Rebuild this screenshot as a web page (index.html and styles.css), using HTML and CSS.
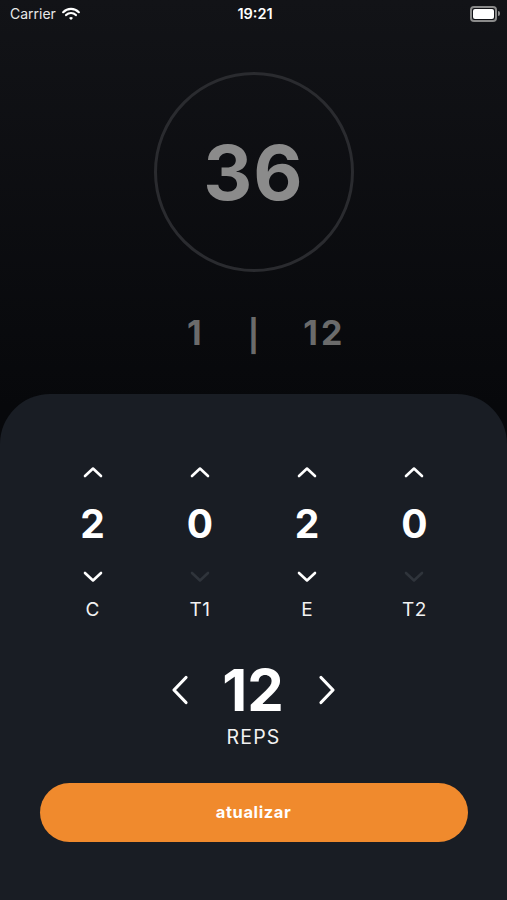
FILE: index.html
```html
<!DOCTYPE html>
<html lang="pt">
<head>
    <meta charset="UTF-8">
    <meta name="viewport" content="width=device-width, initial-scale=1.0">
    <title>Timer</title>
    <link rel="stylesheet" href="styles.css">
</head>
<body>
    <div class="screen">
        <!-- Status bar -->
        <div class="status-bar">
            <div class="carrier">
                Carrier
                <svg class="wifi" width="18" height="14" viewBox="0 0 18 14">
                    <path d="M1.2 5.2 A11 11 0 0 1 16.8 5.2" fill="none" stroke="#fff" stroke-width="2.2" stroke-linecap="round"/>
                    <path d="M4.1 8.1 A6.8 6.8 0 0 1 13.9 8.1" fill="none" stroke="#fff" stroke-width="2.2" stroke-linecap="round"/>
                    <path d="M7 11 L9 13 L11 11 A2.8 2.8 0 0 0 7 11 Z" fill="#fff"/>
                </svg>
            </div>
            <div class="clock">19:21</div>
            <div class="battery">
                <span class="battery-body"><span class="battery-fill"></span></span>
                <span class="battery-cap"></span>
            </div>
        </div>

        <!-- Timer -->
        <div class="timer">
            <div class="ring">36</div>
        </div>

        <div class="progress">
            <span class="progress-left">1</span>
            <span class="progress-sep">|</span>
            <span class="progress-right">12</span>
        </div>

        <!-- Settings panel -->
        <div class="panel">
            <div class="steps">
                <div class="step">
                    <button class="chev"><svg width="20" height="12" viewBox="0 0 20 12"><path d="M2 10 L10 2.5 L18 10"/></svg></button>
                    <div class="step-value">2</div>
                    <button class="chev"><svg width="20" height="12" viewBox="0 0 20 12"><path d="M2 2 L10 9.5 L18 2"/></svg></button>
                    <div class="step-label">C</div>
                </div>
                <div class="step">
                    <button class="chev"><svg width="20" height="12" viewBox="0 0 20 12"><path d="M2 10 L10 2.5 L18 10"/></svg></button>
                    <div class="step-value">0</div>
                    <button class="chev disabled"><svg width="20" height="12" viewBox="0 0 20 12"><path d="M2 2 L10 9.5 L18 2"/></svg></button>
                    <div class="step-label">T1</div>
                </div>
                <div class="step">
                    <button class="chev"><svg width="20" height="12" viewBox="0 0 20 12"><path d="M2 10 L10 2.5 L18 10"/></svg></button>
                    <div class="step-value">2</div>
                    <button class="chev"><svg width="20" height="12" viewBox="0 0 20 12"><path d="M2 2 L10 9.5 L18 2"/></svg></button>
                    <div class="step-label">E</div>
                </div>
                <div class="step">
                    <button class="chev"><svg width="20" height="12" viewBox="0 0 20 12"><path d="M2 10 L10 2.5 L18 10"/></svg></button>
                    <div class="step-value">0</div>
                    <button class="chev disabled"><svg width="20" height="12" viewBox="0 0 20 12"><path d="M2 2 L10 9.5 L18 2"/></svg></button>
                    <div class="step-label">T2</div>
                </div>
            </div>

            <div class="reps">
                <button class="chev-side"><svg width="18" height="30" viewBox="0 0 18 30"><path d="M15 2.5 L3 15 L15 27.5"/></svg></button>
                <div class="reps-value">12</div>
                <button class="chev-side"><svg width="18" height="30" viewBox="0 0 18 30"><path d="M3 2.5 L15 15 L3 27.5"/></svg></button>
            </div>
            <div class="reps-label">REPS</div>

            <button class="update">atualizar</button>
        </div>
    </div>
</body>
</html>
```

FILE: styles.css
```css
/* Base */
body {
    margin: 0;
    background: #0a0b0e;
    font-family: 'Inter', 'Liberation Sans', sans-serif;
    color: #fff;
}

.screen {
    width: 507px;
    height: 900px;
    display: flex;
    flex-direction: column;
    background: linear-gradient(#121317, #07080b 45%);
    overflow: hidden;
}

button {
    font-family: inherit;
    border: none;
    background: none;
    padding: 0;
    cursor: pointer;
}

/* Status bar */
.status-bar {
    height: 27px;
    display: grid;
    grid-template-columns: 1fr auto 1fr;
    align-items: center;
    padding: 0 7px 0 10px;
}

.carrier {
    display: flex;
    align-items: center;
    gap: 6px;
    font-size: 14px;
    color: #e8e8e8;
}

.clock {
    font-size: 14.5px;
    font-weight: 600;
}

.battery {
    justify-self: end;
    display: flex;
    align-items: center;
}

.battery-body {
    width: 21px;
    height: 10px;
    border: 2px solid #8a8a8a;
    border-radius: 4px;
    padding: 1px;
    display: flex;
}

.battery-fill {
    flex: 1;
    background: #fff;
    border-radius: 2px;
}

.battery-cap {
    width: 2px;
    height: 5px;
    margin-left: 1px;
    background: #8a8a8a;
    border-radius: 0 2px 2px 0;
}

/* Timer */
.timer {
    display: flex;
    justify-content: center;
    margin-top: 45px;
}

.ring {
    width: 194px;
    height: 194px;
    border: 3px solid #2a2b2f;
    border-radius: 50%;
    display: flex;
    align-items: center;
    justify-content: center;
    font-size: 76px;
    line-height: 1;
    font-weight: 700;
    color: #8b8b8b;
    letter-spacing: 1px;
}

.progress {
    display: grid;
    grid-template-columns: 1fr auto 1fr;
    align-items: center;
    column-gap: 46px;
    margin-top: 43px;
    font-size: 34px;
    line-height: 1;
    font-weight: 700;
    color: #6b6b6b;
    letter-spacing: 3px;
}

.progress-left {
    justify-self: end;
    margin-right: -3px;
}

.progress-right {
    margin-left: -2px;
}

.progress-sep {
    font-size: 31px;
    letter-spacing: 0;
    padding-top: 5px;
}

/* Panel */
.panel {
    flex: 1;
    margin-top: 43px;
    background: #191d24;
    border-radius: 50px 50px 0 0;
    padding: 66px 39px 0;
    display: flex;
    flex-direction: column;
    align-items: center;
}

.steps {
    align-self: stretch;
    display: grid;
    grid-template-columns: repeat(4, 1fr);
}

.step {
    display: flex;
    flex-direction: column;
    align-items: center;
}

.chev {
    width: 28px;
    height: 24px;
    display: flex;
    align-items: center;
    justify-content: center;
}

.chev path, .chev-side path {
    fill: none;
    stroke: #fff;
    stroke-width: 2.6;
    stroke-linecap: round;
    stroke-linejoin: round;
}

.chev.disabled path {
    stroke: #2f343b;
}

.step-value {
    font-size: 39px;
    line-height: 1;
    font-weight: 700;
    margin: 20px 0 22px;
}

.step-label {
    font-size: 19px;
    line-height: 1;
    margin-top: 11px;
    color: #f2f2f2;
    letter-spacing: 0.5px;
}

/* Reps */
.reps {
    display: flex;
    align-items: center;
    margin-top: 42px;
}

.chev-side {
    width: 18px;
    height: 30px;
    display: flex;
}

.chev-side path {
    stroke-width: 3.2;
}

.reps-value {
    font-size: 58px;
    line-height: 1;
    font-weight: 700;
    margin: 0 34px 0 33px;
}

.reps-label {
    font-size: 19.5px;
    line-height: 1;
    margin-top: 9px;
    color: #f2f2f2;
    letter-spacing: 1.2px;
}

.update {
    margin-top: 35px;
    width: 428px;
    height: 59px;
    border-radius: 30px;
    background: #f08a2d;
    color: #fff;
    font-size: 16.5px;
    font-weight: 700;
    letter-spacing: 0.6px;
}
```
